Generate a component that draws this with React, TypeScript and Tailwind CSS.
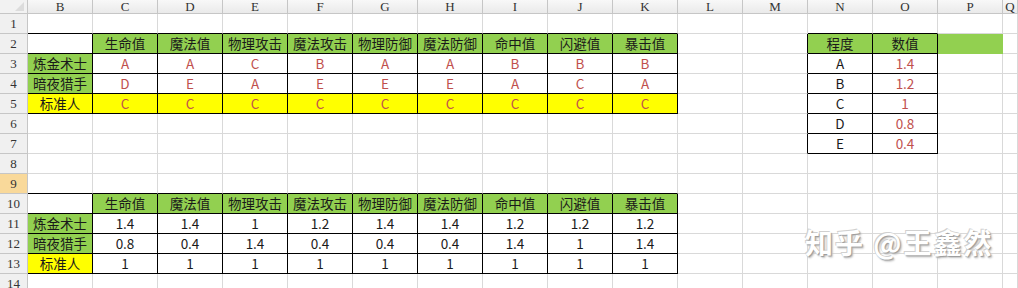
import React from "react";

type Cell = { t?: string; bg?: "green" | "yellow" | "greenFlat"; red?: boolean };

const COLS = ["B", "C", "D", "E", "F", "G", "H", "I", "J", "K", "L", "M", "N", "O", "P", "Q"];
const ROWS = Array.from({ length: 14 }, (_, i) => i + 1);

const STATS = ["生命值", "魔法值", "物理攻击", "魔法攻击", "物理防御", "魔法防御", "命中值", "闪避值", "暴击值"];

const gradeRows = [
  ["炼金术士", "A", "A", "C", "B", "A", "A", "B", "B", "B"],
  ["暗夜猎手", "D", "E", "A", "E", "E", "E", "A", "C", "A"],
  ["标准人", "C", "C", "C", "C", "C", "C", "C", "C", "C"],
];

const valueRows = [
  ["炼金术士", "1.4", "1.4", "1", "1.2", "1.4", "1.4", "1.2", "1.2", "1.2"],
  ["暗夜猎手", "0.8", "0.4", "1.4", "0.4", "0.4", "0.4", "1.4", "1", "1.4"],
  ["标准人", "1", "1", "1", "1", "1", "1", "1", "1", "1"],
];

const scale = [
  ["A", "1.4"],
  ["B", "1.2"],
  ["C", "1"],
  ["D", "0.8"],
  ["E", "0.4"],
];

// sheet cells keyed by "row,col" (col 1 = B)
const cells: Record<string, Cell> = {};
const boxed = new Set<string>();

STATS.forEach((s, i) => {
  cells[`2,${i + 2}`] = { t: s, bg: "green" };
  cells[`10,${i + 2}`] = { t: s, bg: "green" };
});
gradeRows.forEach((row, r) => {
  row.forEach((v, c) => {
    const yellow = r === 2;
    if (c === 0) cells[`${r + 3},1`] = { t: v, bg: yellow ? "yellow" : "green" };
    else cells[`${r + 3},${c + 1}`] = { t: v, red: true, bg: yellow ? "yellow" : undefined };
  });
});
valueRows.forEach((row, r) => {
  row.forEach((v, c) => {
    if (c === 0) cells[`${r + 11},1`] = { t: v, bg: r === 2 ? "yellow" : "green" };
    else cells[`${r + 11},${c + 1}`] = { t: v };
  });
});
cells["2,13"] = { t: "程度", bg: "green" };
cells["2,14"] = { t: "数值", bg: "green" };
scale.forEach(([g, v], i) => {
  cells[`${i + 3},13`] = { t: g };
  cells[`${i + 3},14`] = { t: v, red: true };
});
cells["2,15"] = { bg: "greenFlat" };

for (let r = 2; r <= 5; r++) for (let c = 1; c <= 10; c++) boxed.add(`${r},${c}`);
for (let r = 10; r <= 13; r++) for (let c = 1; c <= 10; c++) boxed.add(`${r},${c}`);
for (let r = 2; r <= 7; r++) for (let c = 13; c <= 14; c++) boxed.add(`${r},${c}`);

const inBox = (r: number, c: number) => boxed.has(`${r},${c}`);

function SheetCell({ r, c }: { r: number; c: number }) {
  const cell = cells[`${r},${c}`] || {};
  const flat = cell.bg === "greenFlat";
  const right = inBox(r, c) || inBox(r, c + 1) ? "border-r-black" : flat ? "border-r-[#92d050]" : "border-r-[#d9d9d9]";
  const bottom = inBox(r, c) || inBox(r + 1, c) ? "border-b-black" : flat ? "border-b-[#92d050]" : "border-b-[#d9d9d9]";
  const bg =
    cell.bg === "green" || flat ? "bg-[#92d050]" : cell.bg === "yellow" ? "bg-[#ffff00]" : "bg-white";
  return (
    <div
      className={`flex items-center justify-center border-r border-b overflow-visible whitespace-nowrap text-[13.5px] leading-none ${right} ${bottom} ${bg} ${
        cell.red ? "text-[#c0504d]" : "text-[#1a1a1a]"
      }`}
    >
      {cell.t}
    </div>
  );
}

export default function App() {
  return (
    <div className="relative w-[1018px] h-[288px] overflow-hidden bg-white font-['Noto_Sans_CJK_SC','Noto_Sans',sans-serif]">
      <div className="grid grid-cols-[28px_repeat(15,65px)_1fr] grid-rows-[14px_repeat(14,20px)]">
        {/* corner */}
        <div className="relative bg-[#f2f2f2] border-r border-b border-[#c6c6c6]">
          <div className="absolute right-[3px] bottom-[2px] w-0 h-0 border-l-[9px] border-l-transparent border-b-[9px] border-b-[#dcdcdc]" />
        </div>
        {COLS.map((l) => (
          <div
            key={l}
            className="flex items-center justify-center bg-gradient-to-b from-[#f8f8f8] to-[#eaeaea] border-r border-b border-[#c6c6c6] text-[13px] leading-none text-[#333] font-['Liberation_Serif',serif]"
          >
            {l}
          </div>
        ))}
        {ROWS.map((r) => (
          <React.Fragment key={r}>
            <div
              className={`flex items-center justify-center border-r border-b border-[#c6c6c6] text-[13px] leading-none text-[#333] font-['Liberation_Serif',serif] ${
                r === 9 ? "bg-[#f9d99a]" : "bg-[#f0f0f0]"
              }`}
            >
              {r}
            </div>
            {COLS.map((_, i) => (
              <SheetCell key={i} r={r} c={i + 1} />
            ))}
          </React.Fragment>
        ))}
      </div>

      {/* site watermark over the sheet */}
      <div className="absolute left-[805px] top-[228px] text-[28px] font-bold tracking-[2px] text-white leading-none [text-shadow:1px_1px_1px_#9a9a9a,-1px_-1px_0_#d0d0d0,2px_2px_2px_#c8c8c8]">
        知乎 @王鑫然
      </div>
    </div>
  );
}
